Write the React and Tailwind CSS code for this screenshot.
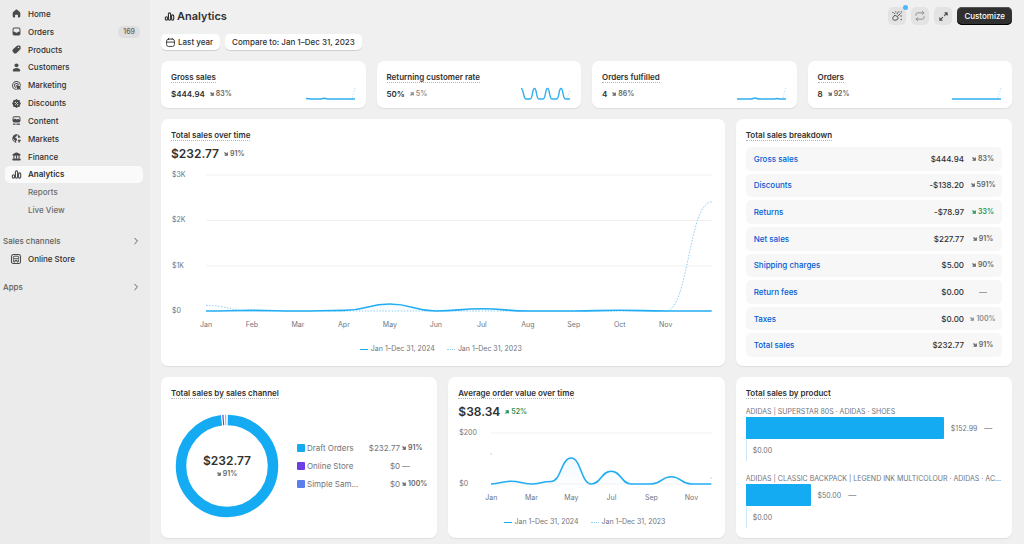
import React from 'react';

function Glyph({ children, className = 'size-[9px]' }) {
  return (
    <svg viewBox="0 0 16 16" className={`shrink-0 overflow-visible ${className}`} fill="currentColor" aria-hidden="true">
      {children}
    </svg>
  );
}

const line = {
  fill: 'none',
  stroke: 'currentColor',
  strokeWidth: 2,
  strokeLinecap: 'round',
  strokeLinejoin: 'round',
};

const HomeIcon = () => (
  <Glyph>
    <path d="M6.6 1.3a2.1 2.1 0 0 1 2.8 0l4.4 4.1c.7.6 1 1.4 1 2.300v5.300a1.900 1.900 0 0 1-1.900 1.900h-1.500a.9.9 0 0 1-.9-.9v-3a1 1 0 0 0-1-1h-3a1 1 0 0 0-1 1v3a.9.9 0 0 1-.9.9H3.100a1.900 1.900 0 0 1-1.900-1.900V7.700c0-.9.4-1.700 1-2.300z" />
  </Glyph>
);
const OrdersIcon = () => (
  <Glyph>
    <path
      fillRule="evenodd"
      d="M4 1h8a3 3 0 0 1 3 3v8a3 3 0 0 1-3 3H4a3 3 0 0 1-3-3V4a3 3 0 0 1 3-3Zm0 1.700A1.300 1.300 0 0 0 2.700 4v4.500h2.100c.7 0 1.200.4 1.500 1 .3.6.8.9 1.700.9s1.400-.3 1.700-.9c.3-.6.8-1 1.500-1h2.100V4A1.300 1.300 0 0 0 12 2.700Z"
    />
  </Glyph>
);
const ProductsIcon = () => (
  <Glyph>
    <path
      fillRule="evenodd"
      d="M8.300 1.600A3 3 0 0 1 10.400.8l2.500.1a2.500 2.500 0 0 1 2.300 2.300l.1 2.400a3 3 0 0 1-.9 2.200l-6.200 6.300a3.500 3.500 0 0 1-4.900 0l-1.500-1.500a3.500 3.500 0 0 1 0-4.900ZM11.500 5.900a1.300 1.300 0 1 0 0-2.600 1.300 1.300 0 0 0 0 2.600Z"
    />
  </Glyph>
);
const CustomersIcon = () => (
  <Glyph>
    <circle cx="8" cy="4.200" r="3.500" />
    <path d="M8 9c3 0 5.500 1.300 6.500 3.300.6 1.300-.4 2.700-1.800 2.700H3.300c-1.400 0-2.400-1.400-1.800-2.700C2.500 10.300 5 9 8 9Z" />
  </Glyph>
);
const MarketingIcon = () => (
  <Glyph>
    <path {...line} strokeWidth="1.800" d="M7.800 14.800A6.900 6.900 0 1 1 14.800 7.600" />
    <path {...line} strokeWidth="1.800" d="M6.300 11A3.500 3.500 0 1 1 11.200 6.600" />
    <path d="M7.300 8.300c-.2-.6.400-1.200 1-1l7 2.400c.8.300.8 1.300.1 1.600l-1.800.7 2 2c.8.900-.6 2.300-1.500 1.500l-2-2-.8 1.900c-.3.700-1.300.7-1.600-.1Z" />
  </Glyph>
);
const DiscountsIcon = () => (
  <Glyph>
    <path d="M6.600.900a2 2 0 0 1 2.800 0l.9.900h1.500a2 2 0 0 1 2.200 2.200v1.500l1.100 1.100a2 2 0 0 1 0 2.800L14 10.500V12a2 2 0 0 1-2.200 2.200h-1.500l-.9.900a2 2 0 0 1-2.800 0l-.9-.9H4.200A2 2 0 0 1 2 12v-1.500L.9 9.400a2 2 0 0 1 0-2.800L2 5.500V4a2 2 0 0 1 2.200-2.200h1.500Z" />
    <path d="m5.600 10.400 4.800-4.800" fill="none" stroke="#ebebeb" strokeWidth="1.400" />
    <circle cx="6" cy="6" r="1.100" fill="#ebebeb" />
    <circle cx="10" cy="10" r="1.100" fill="#ebebeb" />
  </Glyph>
);
const ContentIcon = () => (
  <Glyph>
    <path
      fillRule="evenodd"
      d="M4 .5h8a3 3 0 0 1 3 3v5a3 3 0 0 1-3 3H4a3 3 0 0 1-3-3v-5a3 3 0 0 1 3-3Zm0 1.600a1.400 1.400 0 0 0-1.400 1.400V6l1.900-1c.5-.3 1-.3 1.500 0l2.200 1.300 1.600-.9c.4-.3 1-.3 1.400 0l2.200 1.100v-3A1.400 1.400 0 0 0 12 2.100Z"
    />
    <path {...line} strokeWidth="2" d="M2.500 14.500h3M8.500 14.500h5" />
  </Glyph>
);
const MarketsIcon = () => (
  <Glyph>
    <path {...line} strokeWidth="1.600" d="M7 14.800A6.900 6.900 0 0 1 8 1.100a6.900 6.900 0 0 1 6.500 4.500" />
    <path d="M2 3.800 6.200 1l2.600.9-.5 2.300-2.500 1 .5 2 2.500 1.200.3 2.200-1.900 1.900-.2 2.300c-1-.3-1.800-1.500-2-2.800L3.200 9.500 1.200 8Z" />
    <path d="m11 2.500 3.500 3-2.200 1.600-2-1.500ZM10 11a1 1 0 0 1 1-1h3.800a1 1 0 0 1 .8 1.500l-2.400 3.600a1 1 0 0 1-1.800-.6V12.500Z" />
  </Glyph>
);
const FinanceIcon = () => (
  <Glyph>
    <path d="M7.100 1a2 2 0 0 1 1.800 0l5.300 2.600c1.700.9 1.100 3.100-.6 3.100H2.400C.7 6.700.1 4.500 1.800 3.600Z" />
    <path d="M2.500 6h2v6h-2zM7 6h2v6H7zM11.500 6h2v6h-2z" />
    <path d="M2.200 11.500h11.600a1.700 1.700 0 0 1 0 3.500H2.200a1.700 1.700 0 0 1 0-3.500Z" />
  </Glyph>
);
const AnalyticsIcon = ({ className }) => (
  <Glyph className={className}>
    <g fill="none" stroke="currentColor" strokeWidth="2">
      <rect x=".6" y="8.500" width="3.900" height="6" rx="1.900" />
      <rect x="6.100" y="1.500" width="3.900" height="13" rx="1.900" />
      <rect x="11.600" y="5" width="3.900" height="9.500" rx="1.900" />
    </g>
  </Glyph>
);
const StoreIcon = () => (
  <Glyph className="size-[10px]">
    <rect x=".8" y=".8" width="14.400" height="14.400" rx="3" fill="none" stroke="currentColor" strokeWidth="1.700" />
    <path
      fill="none"
      stroke="currentColor"
      strokeWidth="1.500"
      strokeLinejoin="round"
      d="M4.500 3.500h7l1 3c0 1.500-2.200 1.600-2.300.2-.1 1.400-2.200 1.400-2.200 0 0 1.400-2.100 1.400-2.200 0-.1 1.400-2.300 1.300-2.300-.2ZM4.300 8.200v4.500h2.200v-2.500h3v2.500h2.200V8.200"
    />
  </Glyph>
);
const Chevron = () => (
  <Glyph className="size-[8px]">
    <path {...line} d="m5.500 2.500 5.500 5.500-5.500 5.500" />
  </Glyph>
);
const CalendarIcon = () => (
  <Glyph>
    <rect x="1" y="2" width="14" height="13" rx="3.500" {...line} strokeWidth="1.600" />
    <path {...line} strokeWidth="1.600" d="M1 7.300h14M4.800.6V2M11.200.6V2" />
  </Glyph>
);
const ConfettiIcon = () => (
  <Glyph className="size-[10px]">
    <path
      {...line}
      strokeWidth="1.600"
      d="M4.300 7.200c-1.600.7-3 2.600-3 4.600 0 1.900 1.200 3 3 3 2.700 0 5.600-1.500 5.600-3.400 0-1.700-3.500-4.800-5.600-4.200ZM9.500 8.300l4-4M8.500 4.500V3M4.500 4.300 4 3.800"
    />
    <circle cx="1.500" cy="2.500" r="1.100" />
    <circle cx="6" cy="1.200" r="1" />
    <circle cx="11" cy="1.400" r="1" />
    <circle cx="15" cy="1.500" r="1" />
    <circle cx="14.500" cy="8" r="1.100" />
    <circle cx="14.600" cy="13.500" r="1.100" />
  </Glyph>
);
const RepeatIcon = () => (
  <Glyph className="size-[10px]">
    <path
      {...line}
      strokeWidth="1.500"
      d="M1.500 7V5.700A2.700 2.700 0 0 1 4.200 3h9.800M11.800.6 14.200 3l-2.400 2.400M14.500 9v1.300a2.700 2.700 0 0 1-2.700 2.700H2M4.200 10.600 1.800 13l2.400 2.400"
    />
  </Glyph>
);
const ExpandIcon = () => (
  <Glyph className="size-[9px]">
    <path {...line} strokeWidth="1.900" d="M10.500 1.500h4V5.500M14.200 1.800 9.500 6.500M5.500 14.500h-4v-4M1.800 14.200l4.700-4.700" />
  </Glyph>
);

function Trend({ up = false, value, tone = 'text-[#616161]' }) {
  if (!value) {
    return <span className="text-[8px] leading-[10px] font-medium text-[#8a8a8a]">—</span>;
  }
  return (
    <span className={`inline-flex items-center gap-[2px] text-[7px] leading-[10px] font-semibold whitespace-nowrap ${tone}`}>
      <svg viewBox="0 0 8 8" className="size-[4px]" fill="none" stroke="currentColor" strokeWidth="2.400" aria-hidden="true">
        {up ? <path d="M1 7 6 2M1 1.500h5.500V7" /> : <path d="M1 1l5 5M6.500 1v5.500H1" />}
      </svg>
      {value}
    </span>
  );
}

const nav = [
  { label: 'Home', icon: HomeIcon },
  { label: 'Orders', icon: OrdersIcon, badge: '169' },
  { label: 'Products', icon: ProductsIcon },
  { label: 'Customers', icon: CustomersIcon },
  { label: 'Marketing', icon: MarketingIcon },
  { label: 'Discounts', icon: DiscountsIcon },
  { label: 'Content', icon: ContentIcon },
  { label: 'Markets', icon: MarketsIcon },
  { label: 'Finance', icon: FinanceIcon },
  { label: 'Analytics', icon: AnalyticsIcon, active: true },
  { label: 'Reports', sub: true },
  { label: 'Live View', sub: true },
];

function NavLink({ label, icon: Icon, badge, active, sub }) {
  const weight = active ? 'bg-[#fafafa] font-semibold' : 'font-medium';
  return (
    <a
      href="#"
      aria-current={active ? 'page' : undefined}
      className={`flex h-full items-center rounded-[5px] pl-[7px] ${weight} ${sub ? 'text-[#6b6b6b]' : 'text-[#303030]'}`}
    >
      <span className="flex w-4 shrink-0 items-center text-[#4a4a4a]">{Icon && <Icon />}</span>
      <span className="grow">{label}</span>
      {badge && (
        <span className="mr-[3px] rounded-[5px] bg-[#dedede] px-[5px] text-[7px] leading-[12px] font-medium text-[#616161]">
          {badge}
        </span>
      )}
    </a>
  );
}

function Sidebar() {
  return (
    <aside className="w-[150px] shrink-0 bg-[#ebebeb] pt-[5px] text-[8px] leading-[12px]">
      <nav aria-label="Main">
        <ul className="mr-[7px] ml-[5px] grid h-[214px] auto-rows-fr">
          {nav.map((item) => (
            <li key={item.label}>
              <NavLink {...item} />
            </li>
          ))}
        </ul>
        <button type="button" className="mt-4 flex w-full items-center justify-between pr-[10px] pl-[3px] font-medium text-[#616161]">
          Sales channels
          <Chevron />
        </button>
        <a href="#" className="mt-[6px] flex items-center pl-[11px] font-medium text-[#303030]">
          <span className="flex w-[17px] shrink-0 text-[#4a4a4a]">
            <StoreIcon />
          </span>
          Online Store
        </a>
        <button type="button" className="mt-4 flex w-full items-center justify-between pr-[10px] pl-[3px] font-medium text-[#616161]">
          Apps
          <Chevron />
        </button>
      </nav>
    </aside>
  );
}

function Card({ className = '', children }) {
  return (
    <section className={`min-w-0 rounded-[7px] bg-white px-[10px] pt-[11px] shadow-[0_1px_1px_rgba(0,0,0,0.08)] ${className}`}>
      {children}
    </section>
  );
}

function Title({ children }) {
  return (
    <h2 className="w-fit border-b border-dotted border-[#b5b5b5] text-[8px] leading-[10px] font-semibold whitespace-nowrap text-[#303030]">
      {children}
    </h2>
  );
}

/* Builds an eased path through the points; every point has a flat tangent. */
function easedPath(points) {
  return points
    .map(([x, y], i) => {
      if (i === 0) return `M${x} ${y}`;
      const [px, py] = points[i - 1];
      const mid = (px + x) / 2;
      return `C${mid} ${py} ${mid} ${y} ${x} ${y}`;
    })
    .join('');
}

const toPoints = (heights, base) => heights.map((h, i) => [i * 10, base - h]);

function Plot({ height, className, grid = [], current, previous, marks, fillId }) {
  const width = (current.length - 1) * 10;
  const path = easedPath(toPoints(current, height));
  return (
    <svg viewBox={`0 0 ${width} ${height}`} preserveAspectRatio="none" className={`block w-full overflow-visible ${className}`} fill="none" aria-hidden="true">
      <defs>
        <linearGradient id={fillId} x1="0" y1="0" x2="0" y2="1">
          <stop offset="0" stopColor="#14abf2" stopOpacity=".06" />
          <stop offset="1" stopColor="#14abf2" stopOpacity=".01" />
        </linearGradient>
      </defs>
      {grid.map((y) => (
        <path key={y} d={`M0 ${y}H${width}`} stroke="#f1f1f1" vectorEffect="non-scaling-stroke" />
      ))}
      <path d={`${path}V${height}H0Z`} fill={`url(#${fillId})`} />
      {previous && (
        <path d={easedPath(toPoints(previous, height))} stroke="#8fcdf2" strokeDasharray="1.500 1.500" vectorEffect="non-scaling-stroke" />
      )}
      {marks && <path d={marks} stroke="#8fcdf2" vectorEffect="non-scaling-stroke" />}
      <path d={path} stroke="#22adf2" strokeWidth="1.600" strokeLinejoin="round" vectorEffect="non-scaling-stroke" />
    </svg>
  );
}

function Chart({ yLabels, yAxis, xLabels, children }) {
  return (
    <div className="text-[7px] leading-[10px] text-[#70747c]">
      <div className="flex items-start pr-[3px]">
        <div className={`flex shrink-0 flex-col justify-between pl-px ${yAxis}`}>
          {yLabels.map((label) => (
            <span key={label} className="flex h-0 items-center">
              {label}
            </span>
          ))}
        </div>
        <div className="min-w-0 grow">
          {children}
          <div className="mt-[9px] flex justify-between">
            {xLabels.map((label, i) => (
              <span key={i} className="flex w-0 justify-center whitespace-nowrap">
                {label}
              </span>
            ))}
          </div>
        </div>
      </div>
      <div className="mt-[14px] flex justify-center gap-3 pr-1">
        <span className="flex items-center gap-[3px]">
          <span className="w-2 border-t border-[#14abf2]" />
          Jan 1–Dec 31, 2024
        </span>
        <span className="flex items-center gap-[3px]">
          <span className="w-2 border-t border-dotted border-[#8fcdf2]" />
          Jan 1–Dec 31, 2023
        </span>
      </div>
    </div>
  );
}

const kpis = [
  {
    title: 'Gross sales',
    value: '$444.94',
    trend: '83%',
    path: 'M0 10.500 5 11H15L18 10.200 22 11H49',
    ghost: 'M46 10 49 0',
  },
  {
    title: 'Returning customer rate',
    value: '50%',
    trend: '5%',
    up: true,
    tone: 'text-[#8a8a8a]',
    path: 'M0 .5C3 .5 2 11 5 11H9C12 11 11 .5 13.500 .5S15 11 18 11H22C25 11 24 .5 26.500 .5S28 11 31 11H35.500C38.500 11 37.500 .5 40 .5S41.500 11 44.500 11H49',
    ghost: 'M46 10 49 3',
  },
  { title: 'Orders fulfilled', value: '4', trend: '86%', path: 'M0 11H14C16 11 16 10 18 10S20 11 22 11H37L40 10.500 43 11H49', ghost: 'M46 10 48.500 0' },
  { title: 'Orders', value: '8', trend: '92%', path: 'M0 11H49', ghost: 'M46 10 49 0' },
];

function KpiCard({ title, value, trend, up, tone, path, ghost }) {
  return (
    <Card className="flex h-[47px] items-start justify-between">
      <div>
        <Title>{title}</Title>
        <p className="mt-[5px] flex items-center gap-[5px] text-[8px] leading-[12px] font-semibold">
          {value}
          <Trend value={trend} up={up} tone={tone} />
        </p>
      </div>
      <svg viewBox="0 0 49 12" className="mt-4 mr-px h-3 w-[49px] shrink-0 overflow-visible" fill="none" aria-hidden="true">
        <path d={ghost} stroke="#a9dbf7" strokeWidth=".8" strokeDasharray="1.500 1.500" />
        <path d={path} stroke="#2fb0f0" strokeWidth="1.400" strokeLinejoin="round" />
      </svg>
    </Card>
  );
}

const breakdown = [
  ['Gross sales', '$444.94', '83%'],
  ['Discounts', '-$138.20', '591%'],
  ['Returns', '-$78.97', '33%', 'text-[#1f9254]'],
  ['Net sales', '$227.77', '91%'],
  ['Shipping charges', '$5.00', '90%'],
  ['Return fees', '$0.00', ''],
  ['Taxes', '$0.00', '100%', 'text-[#8a8a8a]'],
  ['Total sales', '$232.77', '91%'],
];

const channels = [
  ['Draft Orders', '$232.77', '91%', 'bg-[#14abf2]'],
  ['Online Store', '$0', '', 'bg-[#6b3fe4]'],
  ['Simple Sam...', '$0', '100%', 'bg-[#5b80ee]'],
];

const products = [
  { name: 'ADIDAS | SUPERSTAR 80S · ADIDAS · SHOES', amount: '$152.99', share: 77.3 },
  { name: 'ADIDAS | CLASSIC BACKPACK | LEGEND INK MULTICOLOUR · ADIDAS · AC...', amount: '$50.00', share: 25.3 },
];

function Slice({ from, size, color }) {
  return (
    <circle
      cx="52"
      cy="52"
      r="46"
      stroke={color}
      strokeWidth="10.500"
      pathLength="360"
      strokeDasharray={`${size} ${360 - size}`}
      strokeDashoffset={-from}
    />
  );
}

export default function App() {
  return (
    <div className="flex min-h-screen bg-[#f0f0f0] font-['Inter',sans-serif] text-[#303030]">
      <Sidebar />
      <main className="min-w-0 grow pr-3 pb-[6px] pl-[11px]">
        <header className="flex items-center justify-between pt-[7px]">
          <h1 className="flex items-center gap-[3px] pl-1 text-[11px] leading-[18px] font-semibold">
            <AnalyticsIcon />
            Analytics
          </h1>
          <div className="flex items-center gap-[5px] text-[#4a4a4a]">
            <button type="button" aria-label="What's new" className="relative flex size-[18px] items-center justify-center rounded-[5px] bg-[#e3e3e3]">
              <ConfettiIcon />
              <span className="absolute -top-[2px] -right-[2px] size-[5px] rounded-full bg-[#4db8ff]" />
            </button>
            <button type="button" aria-label="Auto-refresh" className="flex size-[18px] items-center justify-center rounded-[5px] bg-[#e3e3e3] text-[#8a8a8a]">
              <RepeatIcon />
            </button>
            <button type="button" aria-label="Full screen" className="flex size-[18px] items-center justify-center rounded-[5px] bg-[#e3e3e3]">
              <ExpandIcon />
            </button>
            <button
              type="button"
              className="h-[18px] rounded-[5px] bg-[#303030] px-[7px] text-[8px] leading-[12px] font-medium text-white shadow-[inset_0_-1px_0_#000,inset_0_1px_0_#555]"
            >
              Customize
            </button>
          </div>
        </header>

        <div className="mt-[9px] flex gap-[5px] text-[8px] leading-[16px] font-medium">
          <button type="button" className="flex items-center gap-[3px] rounded-[5px] bg-white pr-[7px] pl-[5px] shadow-[0_1px_0_#cfcfcf]">
            <CalendarIcon />
            Last year
          </button>
          <button type="button" className="rounded-[5px] bg-white px-[7px] shadow-[0_1px_0_#cfcfcf]">
            Compare to: Jan 1–Dec 31, 2023
          </button>
        </div>

        <div className="mt-[11px] grid grid-cols-4 gap-[11px]">
          {kpis.map((kpi) => (
            <KpiCard key={kpi.title} {...kpi} />
          ))}
        </div>

        <div className="mt-[11px] grid grid-cols-3 gap-[11px]">
          <Card className="col-span-2 h-[247px]">
            <Title>Total sales over time</Title>
            <p className="mt-[5px] mb-[13px] flex items-center gap-[5px] text-[12px] leading-[16px] font-semibold">
              $232.77
              <Trend value="91%" />
            </p>
            <Chart
              yLabels={['$3K', '$2K', '$1K', '$0']}
              yAxis="h-[136px] w-[35px]"
              xLabels={['Jan', 'Feb', 'Mar', 'Apr', 'May', 'Jun', 'Jul', 'Aug', 'Sep', 'Oct', 'Nov', '']}
            >
              <Plot
                height={136}
                className="h-[136px]"
                fillId="sales-fill"
                grid={[0, 45.5, 91]}
                current={[0, 0.6, 0, 0.6, 7, 0, 2.3, 0, 0, 0.7, 0, 0]}
                previous={[5.5, 0, 0, 0, 0, 0, 0, 0, 0, 0, 0, 109]}
              />
            </Chart>
          </Card>

          <Card className="h-[247px]">
            <Title>Total sales breakdown</Title>
            <table className="mt-[3px] h-[216px] w-full border-separate border-spacing-x-0 border-spacing-y-[3px] text-[8px] leading-[12px]">
              <tbody>
                {breakdown.map(([label, amount, change, tone]) => (
                  <tr key={label} className="bg-[#f7f7f7]">
                    <th scope="row" className="rounded-l-[5px] pl-2 text-left font-medium">
                      <a href="#" className="text-[#005bd3]">
                        {label}
                      </a>
                    </th>
                    <td className="text-right font-medium">{amount}</td>
                    <td className="w-[38px] rounded-r-[5px] text-center">
                      <span className="flex items-center justify-center">
                        <Trend value={change} tone={tone} />
                      </span>
                    </td>
                  </tr>
                ))}
              </tbody>
            </table>
          </Card>

          <Card className="h-[161px]">
            <Title>Total sales by sales channel</Title>
            <div className="mt-[15px] flex items-center pl-1">
              <div className="relative size-[104px] shrink-0">
                <svg viewBox="0 0 104 104" className="size-full -rotate-90" fill="none" aria-hidden="true">
                  <Slice from={1} size={352} color="#14abf2" />
                  <Slice from={354.6} size={1.4} color="#6b3fe4" />
                  <Slice from={357.6} size={1.4} color="#9aaef2" />
                </svg>
                <div className="absolute inset-0 flex flex-col items-center justify-center text-[12px] leading-[16px] font-semibold">
                  $232.77
                  <Trend value="91%" />
                </div>
              </div>
              <table className="ml-[18px] grow text-[8px] leading-[18px] text-[#70747c]">
                <tbody>
                  {channels.map(([name, amount, change, swatch]) => (
                    <tr key={name}>
                      <th scope="row" className="p-0 text-left font-normal whitespace-nowrap">
                        <span className="flex items-center gap-[2px]">
                          <span className={`size-[8px] rounded-[1px] ${swatch}`} />
                          {name}
                        </span>
                      </th>
                      <td className="p-0 text-right">{amount}</td>
                      <td className="w-[26px] p-0 pl-[2px]">
                        <span className="flex items-center">
                          <Trend value={change} />
                        </span>
                      </td>
                    </tr>
                  ))}
                </tbody>
              </table>
            </div>
          </Card>

          <Card className="h-[161px]">
            <Title>Average order value over time</Title>
            <p className="mt-[5px] mb-[13px] flex items-center gap-[5px] text-[12px] leading-[16px] font-semibold">
              $38.34
              <Trend value="52%" up tone="text-[#1f9254]" />
            </p>
            <Chart
              yLabels={['$200', '$0']}
              yAxis="h-[51px] w-[33px]"
              xLabels={['Jan', '', 'Mar', '', 'May', '', 'Jul', '', 'Sep', '', 'Nov', '']}
            >
              <Plot
                height={51}
                className="h-[51px]"
                fillId="order-fill"
                grid={[0, 51]}
                current={[0, 2.8, 0, 2.5, 26, 0, 12.8, 0, 0, 7.3, 0, 0]}
                marks="M-.2 21H.5M109.500 45H110.200"
              />
            </Chart>
          </Card>

          <Card className="h-[161px]">
            <Title>Total sales by product</Title>
            <ul className="mt-[7px] flex flex-col gap-3 text-[7px] leading-[11px] text-[#70747c]">
              {products.map(({ name, amount, share }) => (
                <li key={name}>
                  <p className="truncate">{name}</p>
                  <div className="flex h-[22px] items-center gap-[7px]">
                    <span className="h-full shrink-0 rounded-r-[1px] bg-[#14abf2]" style={{ width: `${share}%` }} />
                    {amount}
                    <Trend />
                  </div>
                  <div className="mt-px flex h-[21px] items-center gap-[6px]">
                    <span className="h-full w-px bg-[#cfe8f9]" />
                    $0.00
                  </div>
                </li>
              ))}
            </ul>
          </Card>
        </div>
      </main>
    </div>
  );
}
